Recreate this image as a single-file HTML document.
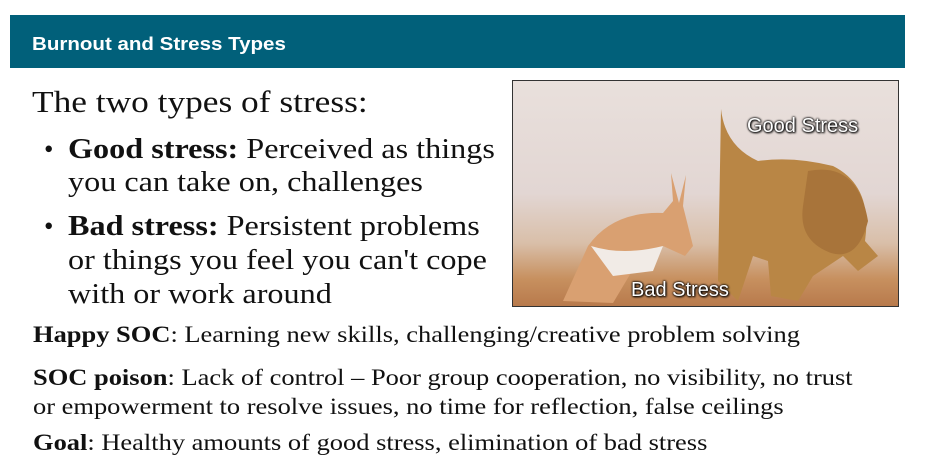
<!DOCTYPE html>
<html><head><meta charset="utf-8"><style>
body{margin:0;width:927px;height:474px;background:#fff;position:relative;overflow:hidden;font-family:"Liberation Serif",serif;color:#111}
.hdr{position:absolute;left:10px;top:15px;width:895px;height:53px;background:#01607a}
.hdr span{position:absolute;left:22px;top:19px;color:#fff;font:bold 18px "Liberation Sans",sans-serif;transform-origin:0 0;transform:scaleX(1.14);white-space:nowrap}
.t{position:absolute;white-space:nowrap;transform-origin:0 0}
.img{position:absolute;left:512px;top:80px;width:387px;height:227px;border:1px solid #333;box-sizing:border-box;overflow:hidden;
background:linear-gradient(180deg,#e9e0dc 0%,#e2d6d3 50%,#d9bfa9 72%,#c7905f 88%,#b87a4c 100%)}
.lbl{position:absolute;color:#fff;font:20px "Liberation Sans",sans-serif;text-shadow:0 0 2px #000,0 0 2px #000,1px 1px 2px #000}
</style></head><body>
<div class="hdr"><span>Burnout and Stress Types</span></div>
<div class="t" style="left:32px;top:84px;font-size:31px;transform:scaleX(1.14)">The two types of stress:</div>
<div class="t" style="left:44px;top:133px;font-size:27px;line-height:33px">•</div>
<div class="t" style="left:68px;top:133px;font-size:28px;line-height:33px;transform:scaleX(1.15)"><b>Good stress:</b> Perceived as things<br>you can take on, challenges</div>
<div class="t" style="left:44px;top:210px;font-size:27px;line-height:33px">•</div>
<div class="t" style="left:68px;top:210px;font-size:28px;line-height:34px;transform:scaleX(1.15)"><b>Bad stress:</b> Persistent problems<br>or things you feel you can't cope<br>with or work around</div>
<div class="t" style="left:33px;top:322px;font-size:23px;transform:scaleX(1.15)"><b>Happy SOC</b>: Learning new skills, challenging/creative problem solving</div>
<div class="t" style="left:33px;top:363px;font-size:23px;line-height:29px;transform:scaleX(1.15)"><b>SOC poison</b>: Lack of control – Poor group cooperation, no visibility, no trust<br>or empowerment to resolve issues, no time for reflection, false ceilings</div>
<div class="t" style="left:33px;top:430px;font-size:23px;transform:scaleX(1.15)"><b>Goal</b>: Healthy amounts of good stress, elimination of bad stress</div>
<div class="img">
<svg width="387" height="227" style="position:absolute;left:0;top:0">
<path d="M50 220 L75 165 Q100 130 150 132 L160 120 L158 92 L166 122 L173 94 L170 125 L180 165 L172 175 L150 165 L125 180 L100 222 Z" fill="#d9a071"/>
<path d="M78 165 Q110 175 150 165 L140 190 L100 195Z" fill="#f1ebe6"/>
<path d="M208 28 Q212 65 245 80 Q280 75 320 85 Q360 105 352 160 L365 175 L345 190 L330 175 L300 195 L285 220 L258 215 L255 180 L240 175 L225 220 L205 200 Z" fill="#b98645"/>
<path d="M295 90 Q345 80 355 140 Q345 180 318 172 Q285 160 290 125 Z" fill="#a8743a"/>
</svg>
<div class="lbl" style="left:234px;top:34px">Good Stress</div>
<div class="lbl" style="left:118px;top:198px">Bad Stress</div>
</div>
</body></html>
